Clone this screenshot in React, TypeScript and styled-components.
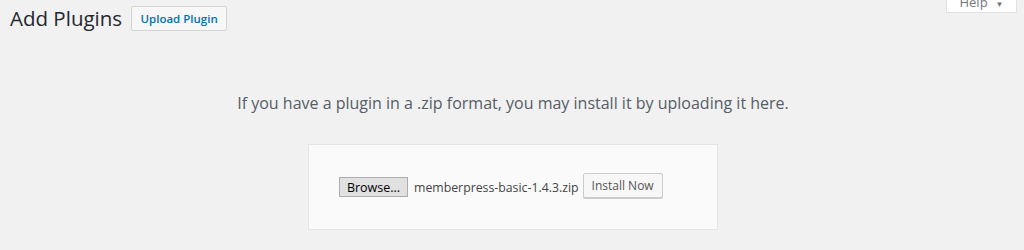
import React from "react";
import styled, { createGlobalStyle } from "styled-components";

const Global = createGlobalStyle`
  html, body { margin: 0; padding: 0; background: #f1f1f1; }
  body { font-family: "Open Sans", "Noto Sans", sans-serif; color: #444; }
`;

const Page = styled.div`
  position: relative;
  width: 1024px;
  height: 250px;
  overflow: hidden;
  background: #f1f1f1;
`;

const HelpTab = styled.button`
  position: absolute;
  top: -1px;
  right: 7px;
  width: 71px;
  height: 14px;
  background: #fff;
  border: 1px solid #e1e1e1;
  border-top: none;
  font-family: "Open Sans", sans-serif;
  font-size: 13px;
  color: #72777c;
  display: flex;
  align-items: flex-end;
  justify-content: center;
  gap: 8px;
  padding: 0 0 3px;
  line-height: 13px;
  overflow: hidden;
`;

const Caret = styled.span`
  font-size: 8px;
  line-height: 10px;
`;

const Header = styled.div`
  display: flex;
  align-items: center;
  gap: 9px;
  padding: 6px 0 0 10px;
`;

const Title = styled.h1`
  margin: 0;
  font-family: "Open Sans", sans-serif;
  font-weight: 400;
  font-size: 20.5px;
  color: #23282d;
  line-height: 25px;
`;

const ActionButton = styled.button`
  height: 25px;
  width: 96px;
  padding: 0;
  border: 1px solid #d4d4d4;
  border-radius: 2px;
  background: #f7f7f7;
  color: #0073aa;
  font-family: "Open Sans", sans-serif;
  font-weight: 600;
  font-size: 11.5px;
`;

const Content = styled.div`
  display: flex;
  flex-direction: column;
  align-items: center;
  padding-top: 61px;
  padding-left: 2px;
`;

const Help = styled.p`
  margin: 0;
  font-family: "Open Sans", sans-serif;
  font-size: 16px;
  line-height: 22px;
  color: #555d66;
`;

const UploadBox = styled.div`
  margin-top: 30px;
  box-sizing: border-box;
  width: 410px;
  height: 86px;
  border: 1px solid #e5e5e5;
  background: #fafafa;
  display: flex;
  align-items: center;
  padding-left: 30px;
`;

const Browse = styled.button`
  height: 20px;
  width: 69px;
  padding: 0;
  border: 1px solid #adadad;
  background: #e1e1e1;
  color: #000;
  font-family: "Open Sans", sans-serif;
  font-size: 12.5px;
`;

const FileName = styled.span`
  margin-left: 6px;
  font-family: "Open Sans", sans-serif;
  font-size: 12.3px;
  color: #444;
`;

const InstallButton = styled.button`
  margin-left: 4px;
  margin-bottom: 3px;
  height: 25px;
  width: 80px;
  padding: 0;
  border: 1px solid #ccc;
  border-radius: 2px;
  background: #f7f7f7;
  box-shadow: 0 1px 0 #ccc;
  color: #555;
  font-family: "Open Sans", sans-serif;
  font-size: 12px;
`;

export default function App() {
  return (
    <Page>
      <Global />
      <HelpTab>
        <span>Help</span>
        <Caret>▼</Caret>
      </HelpTab>
      <Header>
        <Title>Add Plugins</Title>
        <ActionButton>Upload Plugin</ActionButton>
      </Header>
      <Content>
        <Help>If you have a plugin in a .zip format, you may install it by uploading it here.</Help>
        <UploadBox>
          <Browse>Browse...</Browse>
          <FileName>memberpress-basic-1.4.3.zip</FileName>
          <InstallButton>Install Now</InstallButton>
        </UploadBox>
      </Content>
    </Page>
  );
}
